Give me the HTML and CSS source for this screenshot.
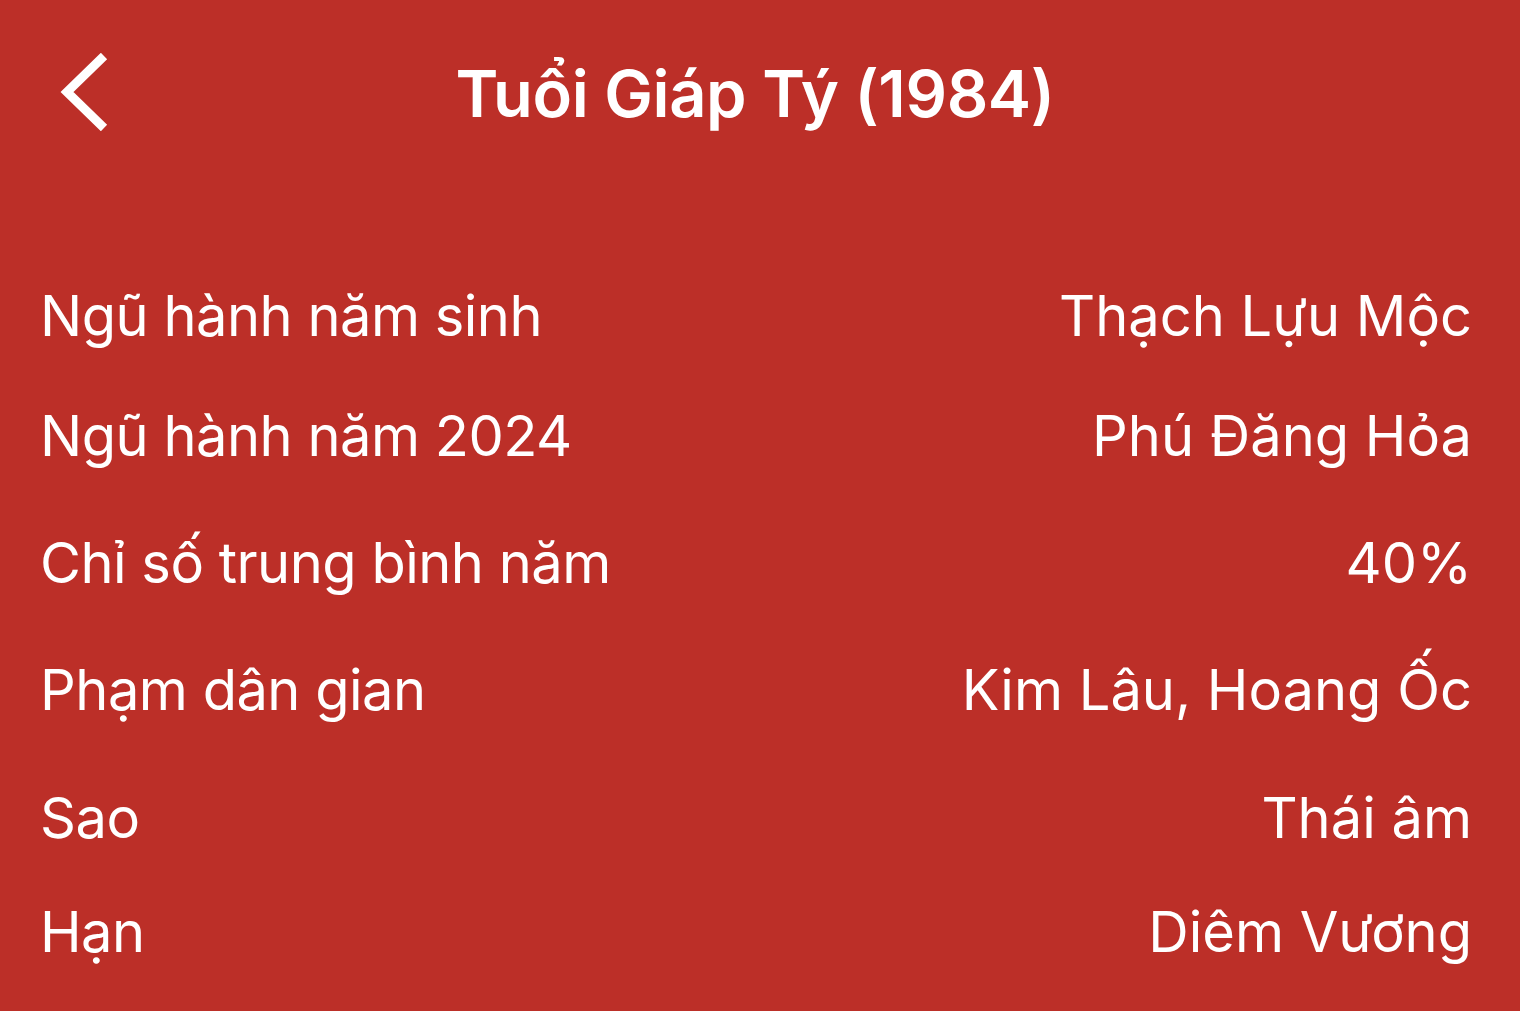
FILE: index.html
```html
<!DOCTYPE html>
<html lang="vi">
<head>
    <meta charset="UTF-8">
    <meta name="viewport" content="width=device-width, initial-scale=1.0">
    <title>Tuổi Giáp Tý (1984)</title>
    <link rel="stylesheet" href="styles.css">
</head>
<body>
    <div class="header">
        <a href="#" class="back-btn" aria-label="Quay lại">
            <svg width="52" height="78" viewBox="0 0 52 78">
                <polyline points="44,3 7,39 44,75" fill="none" stroke="#fff" stroke-width="9" stroke-linecap="butt" stroke-linejoin="miter"/>
            </svg>
        </a>
        <h1 class="title">Tuổi Giáp Tý (1984)</h1>
    </div>

    <div class="info-list">
        <div class="row">
            <span class="label">Ngũ hành năm sinh</span>
            <span class="value">Thạch Lựu Mộc</span>
        </div>
        <div class="row row-near">
            <span class="label">Ngũ hành năm 2024</span>
            <span class="value">Phú Đăng Hỏa</span>
        </div>
        <div class="row">
            <span class="label">Chỉ số trung bình năm</span>
            <span class="value">40%</span>
        </div>
        <div class="row">
            <span class="label">Phạm dân gian</span>
            <span class="value">Kim Lâu, Hoang Ốc</span>
        </div>
        <div class="row row-far">
            <span class="label">Sao</span>
            <span class="value">Thái âm</span>
        </div>
        <div class="row row-close">
            <span class="label">Hạn</span>
            <span class="value">Diêm Vương</span>
        </div>
    </div>
</body>
</html>
```

FILE: styles.css
```css
* {
    margin: 0;
    padding: 0;
    box-sizing: border-box;
    font-family: Inter, "Noto Sans", sans-serif;
}

body {
    background-color: #bc2f28;
    color: #fff;
    height: 100vh;
    overflow: hidden;
}

.header {
    position: relative;
    height: 186px;
    display: flex;
    align-items: center;
    justify-content: center;
}

.back-btn {
    position: absolute;
    left: 60px;
    top: 53px;
    display: block;
    line-height: 0;
}

.title {
    font-size: 65px;
    font-weight: 600;
    letter-spacing: -0.4px;
    margin-right: 10px;
}

.info-list {
    padding: 100px 48px 0 40px;
}

.row {
    display: flex;
    justify-content: space-between;
    align-items: center;
    height: 60px;
    margin-top: 67px;
    font-size: 56px;
    letter-spacing: -0.5px;
}

.value {
    letter-spacing: 0;
}

.row:first-child {
    margin-top: 0;
}

.row-near {
    margin-top: 60px;
}

.row-far {
    margin-top: 68px;
}

.row-close {
    margin-top: 54px;
}
```
